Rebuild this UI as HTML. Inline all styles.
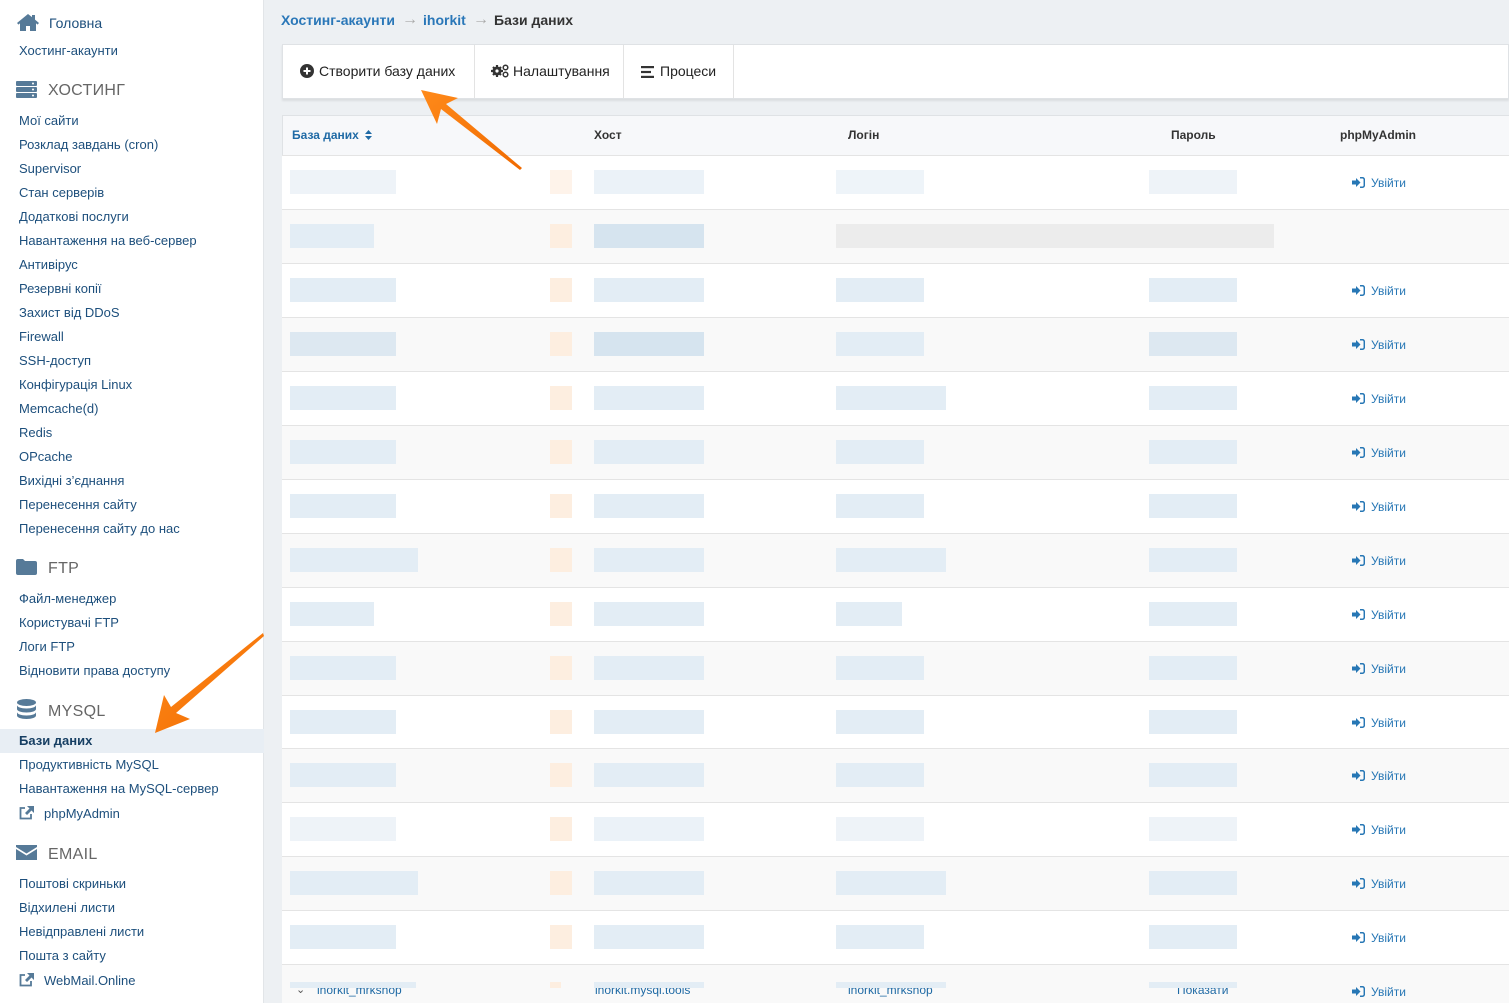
<!DOCTYPE html>
<html><head><meta charset="utf-8">
<style>
*{box-sizing:border-box;margin:0;padding:0}
body{width:1509px;height:1003px;overflow:hidden;background:#edf0f3;font-family:"Liberation Sans",Arial,sans-serif;position:relative}
#side{position:absolute;left:0;top:0;width:264px;height:1003px;background:#fff;border-right:1px solid #e2e5e8}
.sl{position:absolute;left:19px;font-size:13px;color:#1d4f7c;white-space:nowrap}
.sh{position:absolute;left:48px;font-size:16px;color:#666;letter-spacing:.3px}
.act{position:absolute;left:0;width:264px;height:24px;background:#e8eef4}
.bc{position:absolute;top:12px;font-size:14px;font-weight:bold}
#tb{position:absolute;left:282px;top:44px;width:1227px;height:55px;background:#fff;border:1px solid #dfe2e5;box-shadow:0 2px 2px rgba(0,0,0,.08)}
.tbi{position:absolute;top:0;height:53px;line-height:53px;font-size:14px;color:#222;border-right:1px solid #e3e3e3}
#tab{position:absolute;left:282px;top:115px;width:1227px;height:888px;background:#fff;border:1px solid #dfe2e5}
.th{position:absolute;top:128px;font-size:12px;font-weight:bold;color:#333}
.r{position:absolute;left:282px;width:1227px;height:54px;border-top:1px solid #e4e4e4;background:#fff}
.r.e{background:#f9f9f9}
.r div{position:absolute;top:14px;height:24px;background:#e3edf5}
.r .o{background:#fdeee0}
.r .g{background:#f1f1f1}
.r span{position:absolute;left:1070px;top:20px;font-size:12px;color:#2777b5;white-space:nowrap}
.r span svg{vertical-align:-1px;margin-right:6px}
</style></head><body>
<svg width="0" height="0" style="position:absolute"><defs><symbol id="si" viewBox="0 0 13 11"><path d="M0 3.5h4V1l4.5 4.5L4 10V7.5H0z" fill="#2777b5"/><path d="M8 .8h2.5a1.8 1.8 0 0 1 1.8 1.8v5.8a1.8 1.8 0 0 1-1.8 1.8H8" fill="none" stroke="#2777b5" stroke-width="1.5"/></symbol></defs></svg>
<div id="side">
<svg style="position:absolute;left:16px;top:13px" width="24" height="19" viewBox="0 0 24 19"><path d="M12 1 1 10l1.5 1.6L4 10.3V18h6v-5h4v5h6v-7.7l1.5 1.3L23 10 19 6.6V2h-3v2.1z" fill="#567a98"/></svg>
<div style="position:absolute;left:49px;top:15px;font-size:14px;color:#1d4f7c">Головна</div>
<div class="sl" style="top:43px">Хостинг-акаунти</div>
<svg style="position:absolute;left:16px;top:81px" width="21" height="17" viewBox="0 0 21 17"><rect x="0" y="0" width="21" height="5" rx="1" fill="#567a98"/><rect x="0" y="6" width="21" height="5" rx="1" fill="#567a98"/><rect x="0" y="12" width="21" height="5" rx="1" fill="#567a98"/><circle cx="17" cy="2.5" r="1" fill="#fff"/><circle cx="17" cy="8.5" r="1" fill="#fff"/><circle cx="17" cy="14.5" r="1" fill="#fff"/></svg>
<div class="sh" style="top:82px">ХОСТИНГ</div>
<div class="sl" style="top:113px">Мої сайти</div>
<div class="sl" style="top:137px">Розклад завдань (cron)</div>
<div class="sl" style="top:161px">Supervisor</div>
<div class="sl" style="top:185px">Стан серверів</div>
<div class="sl" style="top:209px">Додаткові послуги</div>
<div class="sl" style="top:233px">Навантаження на веб-сервер</div>
<div class="sl" style="top:257px">Антивірус</div>
<div class="sl" style="top:281px">Резервні копії</div>
<div class="sl" style="top:305px">Захист від DDoS</div>
<div class="sl" style="top:329px">Firewall</div>
<div class="sl" style="top:353px">SSH-доступ</div>
<div class="sl" style="top:377px">Конфігурація Linux</div>
<div class="sl" style="top:401px">Memcache(d)</div>
<div class="sl" style="top:425px">Redis</div>
<div class="sl" style="top:449px">OPcache</div>
<div class="sl" style="top:473px">Вихідні з’єднання</div>
<div class="sl" style="top:497px">Перенесення сайту</div>
<div class="sl" style="top:521px">Перенесення сайту до нас</div>
<svg style="position:absolute;left:16px;top:559px" width="21" height="16" viewBox="0 0 21 16"><path d="M0 2a2 2 0 0 1 2-2h5l2 2h10a2 2 0 0 1 2 2v10a2 2 0 0 1-2 2H2a2 2 0 0 1-2-2z" fill="#567a98"/></svg>
<div class="sh" style="top:560px">FTP</div>
<div class="sl" style="top:591px">Файл-менеджер</div>
<div class="sl" style="top:615px">Користувачі FTP</div>
<div class="sl" style="top:639px">Логи FTP</div>
<div class="sl" style="top:663px">Відновити права доступу</div>
<svg style="position:absolute;left:17px;top:699px" width="19" height="20" viewBox="0 0 19 20"><ellipse cx="9.5" cy="3.5" rx="9.5" ry="3.5" fill="#567a98"/><path d="M0 6c0 2 4 3.5 9.5 3.5S19 8 19 6v4c0 2-4 3.5-9.5 3.5S0 12 0 10z" fill="#567a98"/><path d="M0 13c0 2 4 3.5 9.5 3.5S19 15 19 13v3.5c0 2-4 3.5-9.5 3.5S0 18.5 0 16.5z" fill="#567a98"/></svg>
<div class="sh" style="top:703px">MYSQL</div>
<div class="act" style="top:729px"></div>
<div class="sl" style="top:733px;font-weight:bold;color:#173f63">Бази даних</div>
<div class="sl" style="top:757px">Продуктивність MySQL</div>
<div class="sl" style="top:781px">Навантаження на MySQL-сервер</div>
<svg style="position:absolute;left:19px;top:806px" width="15" height="14" viewBox="0 0 15 14"><path d="M12 8v4.5H1.5V2H6" fill="none" stroke="#567a98" stroke-width="1.8"/><path d="M8 0h7v7l-2.5-2.5L8 9 6 7l4.5-4.5z" fill="#567a98"/></svg>
<div class="sl" style="top:806px;left:44px">phpMyAdmin</div>
<svg style="position:absolute;left:16px;top:845px" width="21" height="15" viewBox="0 0 21 15"><path d="M0 0h21v2L10.5 8.5 0 2z" fill="#567a98"/><path d="M0 4l10.5 6.5L21 4v11H0z" fill="#567a98"/></svg>
<div class="sh" style="top:846px">EMAIL</div>
<div class="sl" style="top:876px">Поштові скриньки</div>
<div class="sl" style="top:900px">Відхилені листи</div>
<div class="sl" style="top:924px">Невідправлені листи</div>
<div class="sl" style="top:948px">Пошта з сайту</div>
<svg style="position:absolute;left:19px;top:973px" width="15" height="14" viewBox="0 0 15 14"><path d="M12 8v4.5H1.5V2H6" fill="none" stroke="#567a98" stroke-width="1.8"/><path d="M8 0h7v7l-2.5-2.5L8 9 6 7l4.5-4.5z" fill="#567a98"/></svg>
<div class="sl" style="top:973px;left:44px">WebMail.Online</div>
</div>

<div class="bc" style="left:281px;color:#2a77b8">Хостинг-акаунти</div>
<div class="bc" style="left:402px;top:11px;color:#aaa;font-size:16px">→</div>
<div class="bc" style="left:423px;color:#2a77b8">ihorkit</div>
<div class="bc" style="left:473px;top:11px;color:#aaa;font-size:16px">→</div>
<div class="bc" style="left:494px;color:#333">Бази даних</div>

<div id="tb">
<div class="tbi" style="left:0;width:192px;padding-left:17px"><svg style="vertical-align:-2px;margin-right:5px" width="14" height="14" viewBox="0 0 14 14"><circle cx="7" cy="7" r="7" fill="#333"/><path d="M7 3.5v7M3.5 7h7" stroke="#fff" stroke-width="2"/></svg>Створити базу даних</div>
<div class="tbi" style="left:192px;width:149px;padding-left:16px"><svg style="vertical-align:-2px;margin-right:4px" width="18" height="14" viewBox="0 0 18 14"><path d="M6 1v12M0 7h12M2 3l8 8M10 3l-8 8" stroke="#333" stroke-width="2.2"/><circle cx="6" cy="7" r="4.5" fill="#333"/><circle cx="6" cy="7" r="1.6" fill="#fff"/><circle cx="14.5" cy="3.5" r="2.3" fill="none" stroke="#333" stroke-width="1.5"/><circle cx="14.5" cy="10.5" r="2.3" fill="none" stroke="#333" stroke-width="1.5"/></svg>Налаштування</div>
<div class="tbi" style="left:341px;width:110px;padding-left:17px"><svg style="vertical-align:-2px;margin-right:6px" width="13" height="12" viewBox="0 0 13 12"><rect y="0" width="13" height="2.2" fill="#333"/><rect y="4.9" width="10" height="2.2" fill="#333"/><rect y="9.8" width="13" height="2.2" fill="#333"/></svg>Процеси</div>
</div>

<div id="tab"></div>
<div style="position:absolute;left:283px;top:116px;width:1226px;height:39px;background:#f7f8fa"></div>
<div class="th" style="left:292px;color:#1f6aa5">База даних <svg style="vertical-align:-1px;margin-left:3px" width="7" height="10" viewBox="0 0 7 10"><path d="M3.5 0 7 4H0zM3.5 10 7 6H0z" fill="#1f6aa5"/></svg></div>
<div class="th" style="left:594px">Хост</div>
<div class="th" style="left:848px">Логін</div>
<div class="th" style="left:1171px">Пароль</div>
<div class="th" style="left:1340px">phpMyAdmin</div>

<div class="r" style="top:155px"><div style="left:8px;width:106px;background:#eef3f8"></div><div class="o" style="left:268px;width:22px;background:#fef3ea"></div><div style="left:312px;width:110px;background:#ebf2f8"></div><div style="left:554px;width:88px;background:#eef4f9"></div><div style="left:867px;width:88px;background:#eef3f8"></div><span><svg width="13" height="11"><use href="#si"/></svg>Увійти</span></div>
<div class="r e" style="top:209px"><div style="left:8px;width:84px"></div><div class="o" style="left:268px;width:22px"></div><div style="left:312px;width:110px;background:#d6e4ef"></div><div class="g" style="left:554px;width:438px;background:#ececec"></div></div>
<div class="r" style="top:263px"><div style="left:8px;width:106px"></div><div class="o" style="left:268px;width:22px"></div><div style="left:312px;width:110px"></div><div style="left:554px;width:88px"></div><div style="left:867px;width:88px"></div><span><svg width="13" height="11"><use href="#si"/></svg>Увійти</span></div>
<div class="r e" style="top:317px"><div style="left:8px;width:106px;background:#dde8f1"></div><div class="o" style="left:268px;width:22px"></div><div style="left:312px;width:110px;background:#d6e4ef"></div><div style="left:554px;width:88px"></div><div style="left:867px;width:88px;background:#dde8f1"></div><span><svg width="13" height="11"><use href="#si"/></svg>Увійти</span></div>
<div class="r" style="top:371px"><div style="left:8px;width:106px"></div><div class="o" style="left:268px;width:22px"></div><div style="left:312px;width:110px"></div><div style="left:554px;width:110px"></div><div style="left:867px;width:88px"></div><span><svg width="13" height="11"><use href="#si"/></svg>Увійти</span></div>
<div class="r e" style="top:425px"><div style="left:8px;width:106px"></div><div class="o" style="left:268px;width:22px"></div><div style="left:312px;width:110px"></div><div style="left:554px;width:88px"></div><div style="left:867px;width:88px"></div><span><svg width="13" height="11"><use href="#si"/></svg>Увійти</span></div>
<div class="r" style="top:479px"><div style="left:8px;width:106px"></div><div class="o" style="left:268px;width:22px"></div><div style="left:312px;width:110px"></div><div style="left:554px;width:88px"></div><div style="left:867px;width:88px"></div><span><svg width="13" height="11"><use href="#si"/></svg>Увійти</span></div>
<div class="r e" style="top:533px"><div style="left:8px;width:128px"></div><div class="o" style="left:268px;width:22px"></div><div style="left:312px;width:110px"></div><div style="left:554px;width:110px"></div><div style="left:867px;width:88px"></div><span><svg width="13" height="11"><use href="#si"/></svg>Увійти</span></div>
<div class="r" style="top:587px"><div style="left:8px;width:84px"></div><div class="o" style="left:268px;width:22px"></div><div style="left:312px;width:110px"></div><div style="left:554px;width:66px"></div><div style="left:867px;width:88px"></div><span><svg width="13" height="11"><use href="#si"/></svg>Увійти</span></div>
<div class="r e" style="top:641px"><div style="left:8px;width:106px"></div><div class="o" style="left:268px;width:22px"></div><div style="left:312px;width:110px"></div><div style="left:554px;width:88px"></div><div style="left:867px;width:88px"></div><span><svg width="13" height="11"><use href="#si"/></svg>Увійти</span></div>
<div class="r" style="top:695px"><div style="left:8px;width:106px"></div><div class="o" style="left:268px;width:22px"></div><div style="left:312px;width:110px"></div><div style="left:554px;width:88px"></div><div style="left:867px;width:88px"></div><span><svg width="13" height="11"><use href="#si"/></svg>Увійти</span></div>
<div class="r e" style="top:748px"><div style="left:8px;width:106px"></div><div class="o" style="left:268px;width:22px"></div><div style="left:312px;width:110px"></div><div style="left:554px;width:88px"></div><div style="left:867px;width:88px"></div><span><svg width="13" height="11"><use href="#si"/></svg>Увійти</span></div>
<div class="r" style="top:802px"><div style="left:8px;width:106px;background:#eef3f8"></div><div class="o" style="left:268px;width:22px"></div><div style="left:312px;width:110px;background:#ebf2f8"></div><div style="left:554px;width:88px;background:#eef3f8"></div><div style="left:867px;width:88px;background:#eef3f8"></div><span><svg width="13" height="11"><use href="#si"/></svg>Увійти</span></div>
<div class="r e" style="top:856px"><div style="left:8px;width:128px"></div><div class="o" style="left:268px;width:22px"></div><div style="left:312px;width:110px"></div><div style="left:554px;width:110px"></div><div style="left:867px;width:88px"></div><span><svg width="13" height="11"><use href="#si"/></svg>Увійти</span></div>
<div class="r" style="top:910px"><div style="left:8px;width:106px"></div><div class="o" style="left:268px;width:22px"></div><div style="left:312px;width:110px"></div><div style="left:554px;width:88px"></div><div style="left:867px;width:88px"></div><span><svg width="13" height="11"><use href="#si"/></svg>Увійти</span></div>
<div class="r e" style="top:964px;height:39px">
<p style="position:absolute;left:14px;top:18px;font-size:11px;color:#555">&#8964;</p>
<p style="position:absolute;left:35px;top:18px;font-size:12px;color:#1f6aa5">ihorkit_mrkshop</p>
<p style="position:absolute;left:313px;top:18px;font-size:12px;color:#1f6aa5">ihorkit.mysql.tools</p>
<p style="position:absolute;left:566px;top:18px;font-size:12px;color:#1f6aa5">ihorkit_mrkshop</p>
<p style="position:absolute;left:895px;top:18px;font-size:12px;color:#1f6aa5">Показати</p>
<div style="left:8px;width:126px;top:17px;height:6px"></div><div class="o" style="left:268px;width:11px;top:17px;height:6px"></div><div style="left:312px;width:110px;top:17px;height:6px"></div><div style="left:554px;width:110px;top:17px;height:6px"></div><div style="left:867px;width:88px;top:17px;height:6px"></div>
<span><svg width="13" height="11"><use href="#si"/></svg>Увійти</span></div>

<svg style="position:absolute;left:0;top:0" width="1509" height="1003">
<defs><linearGradient id="g1" x1="0" y1="0" x2="1" y2="1"><stop offset="0" stop-color="#ff8a1a"/><stop offset="1" stop-color="#f06a00"/></linearGradient></defs>
<polygon points="421,90 458,98 446,104 522,168 520,170 441,109 437,124" fill="url(#g1)"/>
<polygon points="155,733 164,695 171,707 263,633 264,636 176,713 190,719" fill="url(#g1)"/>
</svg>
</body></html>
